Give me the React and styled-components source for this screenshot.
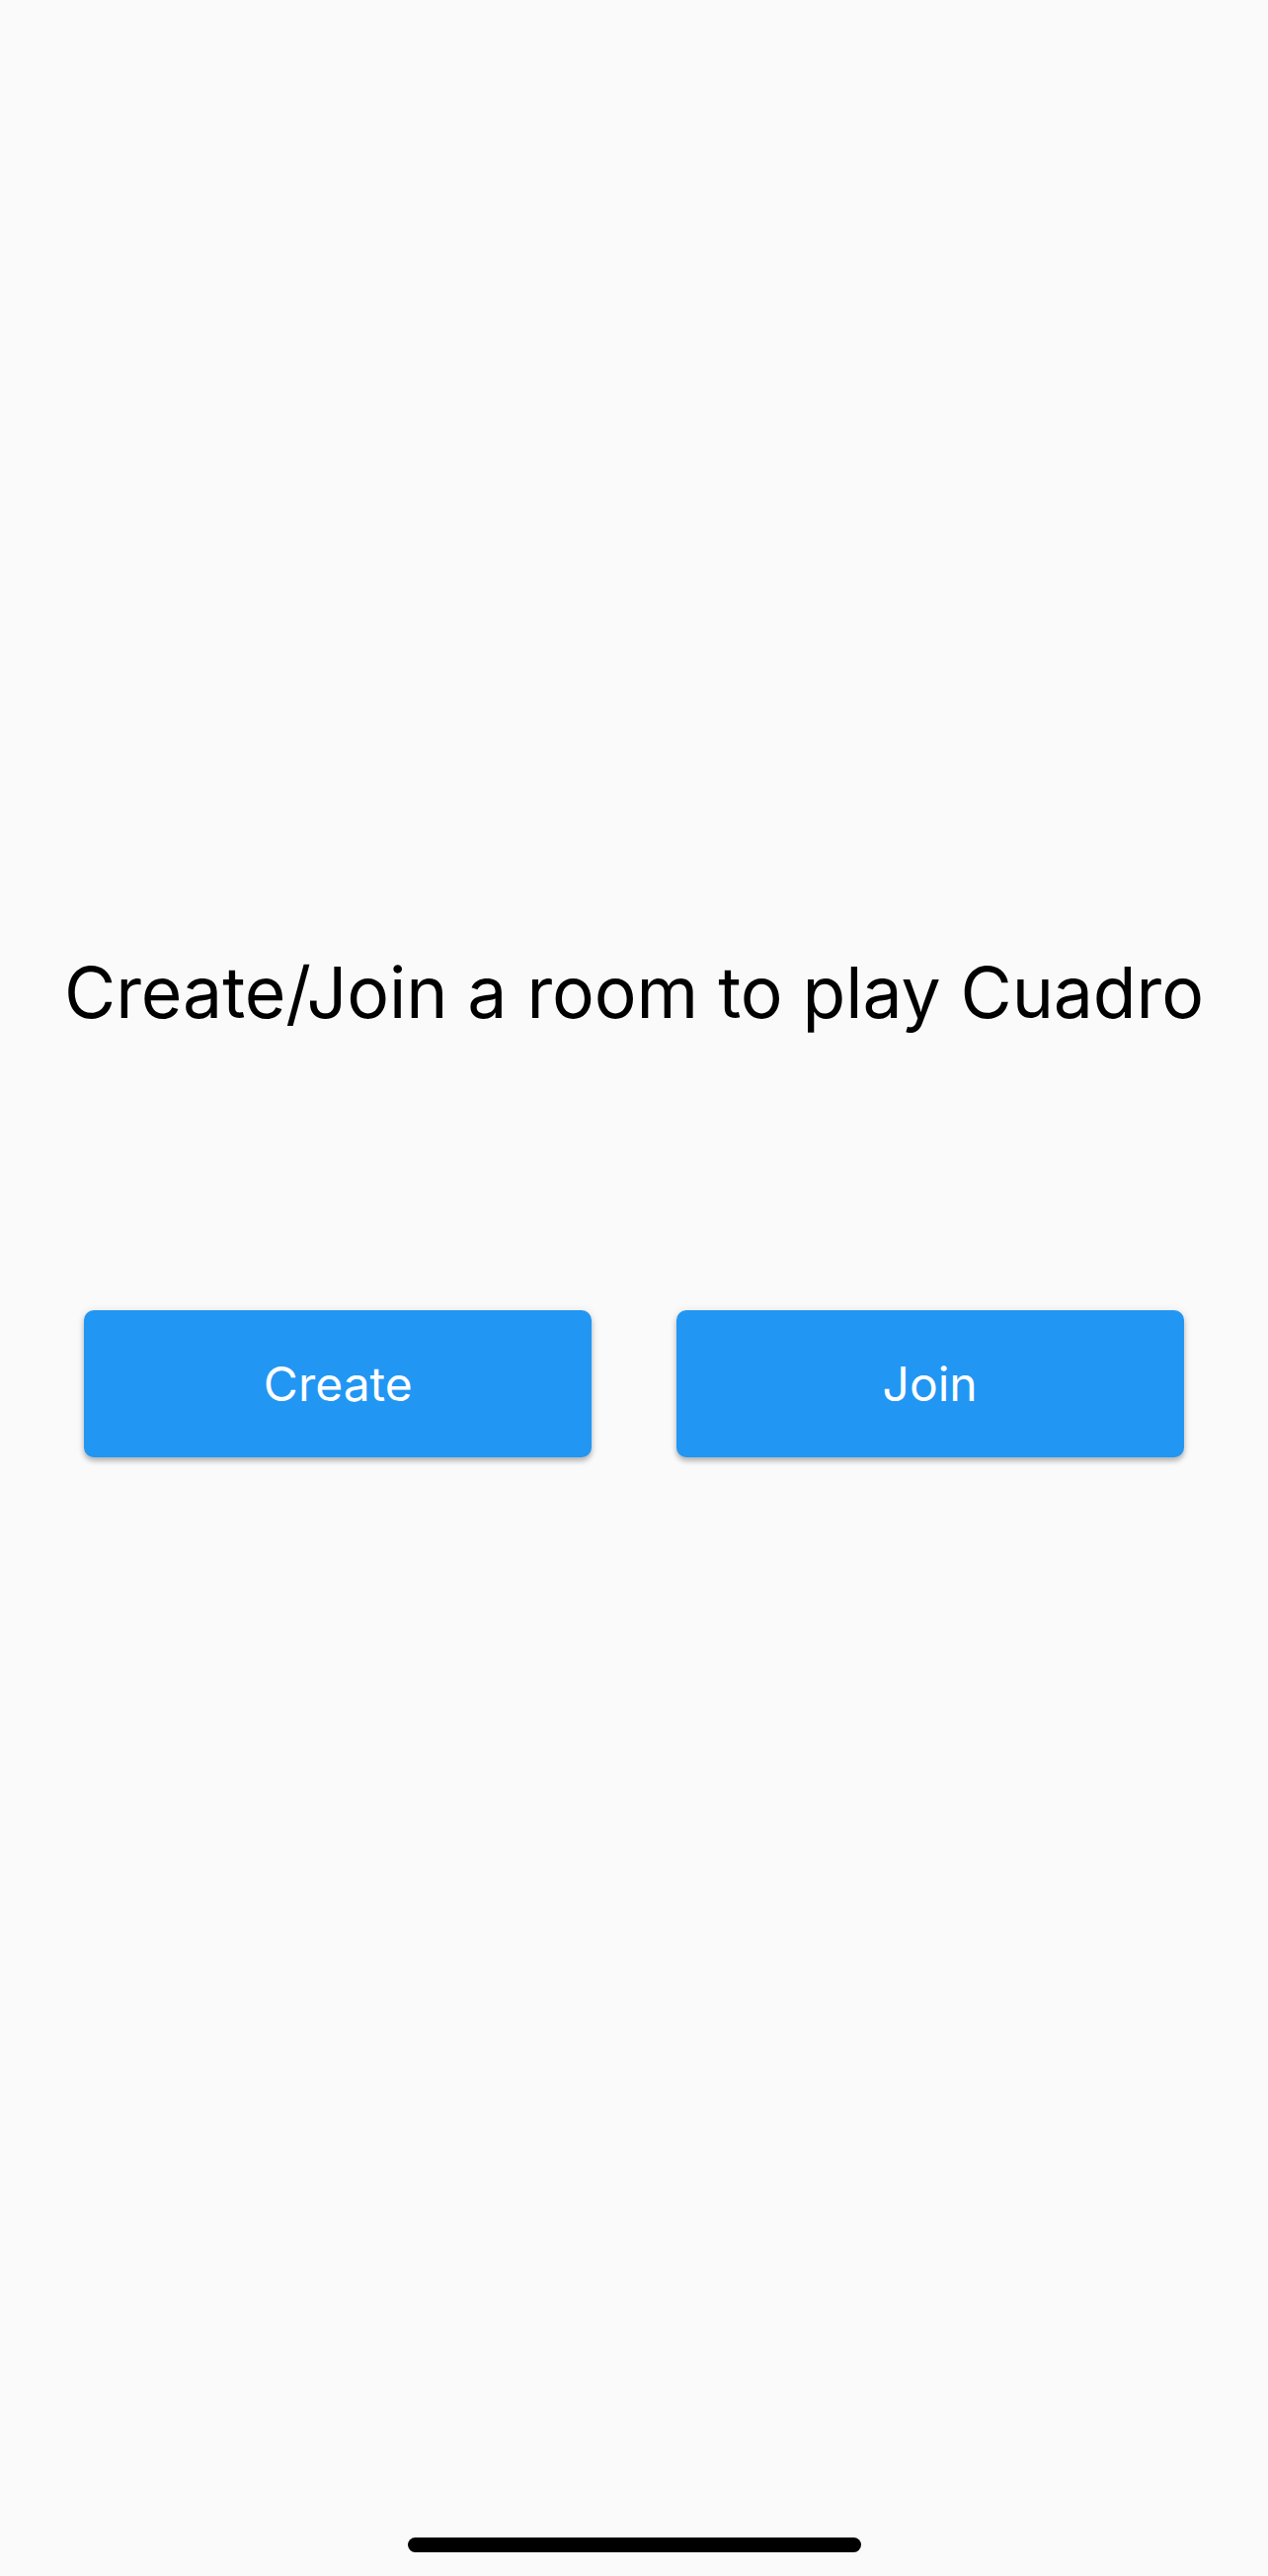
import React from "react";
import styled, { createGlobalStyle } from "styled-components";

const GlobalStyle = createGlobalStyle`
  html, body {
    margin: 0;
    padding: 0;
    background: #fafafa;
  }
  body {
    font-family: Inter, "Noto Sans", sans-serif;
  }
`;

const Screen = styled.div`
  display: flex;
  flex-direction: column;
  align-items: center;
  height: 2609px;
  background: #fafafa;
  box-sizing: border-box;
`;

const Title = styled.h1`
  margin: 962px 0 0;
  font-size: 71.5px;
  font-weight: 400;
  line-height: 86px;
  color: #000;
  text-align: center;
  letter-spacing: -0.1px;
`;

const ButtonRow = styled.div`
  display: flex;
  justify-content: space-evenly;
  width: 100%;
  margin-top: 279px;
`;

const ActionButton = styled.button`
  width: 514px;
  height: 149px;
  border: none;
  border-radius: 10px;
  background: #2196f3;
  color: #fff;
  font-family: Inter, "Noto Sans", sans-serif;
  font-size: 48px;
  font-weight: 400;
  box-shadow: 0 4px 5px rgba(0, 0, 0, 0.22), 0 1px 8px rgba(0, 0, 0, 0.12);
  cursor: pointer;
`;

const HomeIndicator = styled.div`
  margin-top: auto;
  margin-bottom: 24px;
  width: 459px;
  height: 15px;
  border-radius: 8px;
  background: #000;
`;

export default function App() {
  return (
    <>
      <GlobalStyle />
      <Screen>
        <Title>Create/Join a room to play Cuadro</Title>
        <ButtonRow>
          <ActionButton>Create</ActionButton>
          <ActionButton>Join</ActionButton>
        </ButtonRow>
        <HomeIndicator />
      </Screen>
    </>
  );
}
